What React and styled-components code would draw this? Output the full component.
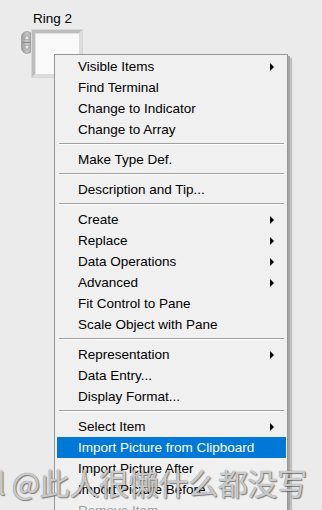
import React from 'react';
import styled, { createGlobalStyle } from 'styled-components';

const GlobalStyle = createGlobalStyle`
  html, body {
    margin: 0;
    padding: 0;
    background: #ebebeb;
  }
  body {
    font-family: 'Liberation Sans', Arial, sans-serif;
  }
`;

const Page = styled.div`
  position: relative;
  width: 322px;
  height: 510px;
  overflow: hidden;
  background: #ebebeb;
`;

// Ring control
const Ring = styled.div`
  display: flex;
  flex-direction: column;
  padding: 10px 0 0 21px;
`;

const RingLabel = styled.div`
  margin-left: 12px;
  font-size: 13.5px;
  line-height: 17px;
  color: #000;
`;

const RingBody = styled.div`
  display: flex;
  align-items: flex-start;
  margin-top: 3px;
`;

const Spinner = styled.svg`
  display: block;
  width: 12px;
  height: 23px;
  margin-top: 1px;
  margin-right: -1px;
`;

const RingBox = styled.div`
  width: 44px;
  height: 41px;
  background: #f9f9f9;
  border: 3px solid;
  border-color: #bcbcbc #dcdcdc #dcdcdc #bcbcbc;
  box-shadow: inset 1px 1px 0 #e2e2e2;
  outline: 1px solid #d8d8d8;
`;

// Menu
const Menu = styled.div`
  position: absolute;
  left: 54px;
  top: 54px;
  width: 232px;
  padding: 1px 0 0;
  background: #f0f0f0;
  border: 1px solid #979797;
  box-shadow: 2px 2px 0 #a6a6a6, 4px 4px 1px rgba(0, 0, 0, 0.18);
  font-size: 13.5px;
  color: #000;
`;

const Item = styled.div`
  position: relative;
  display: flex;
  align-items: center;
  height: 21px;
  margin: 0 1px 0 2px;
  padding-left: 21px;
  white-space: nowrap;
  background: ${p => (p.$active ? '#0078d7' : 'transparent')};
  color: ${p => (p.$active ? '#fff' : p.$disabled ? '#a0a0a0' : '#000')};
`;

const Arrow = styled.span`
  position: absolute;
  right: 12px;
  top: 7px;
  width: 0;
  height: 0;
  border-top: 4px solid transparent;
  border-bottom: 4px solid transparent;
  border-left: 4px solid #000;
`;

const Separator = styled.div`
  height: 9px;
  display: flex;
  flex-direction: column;
  padding: 3px 3px 0 4px;
  box-sizing: border-box;
  &::before {
    content: '';
    height: 1px;
    background: #a0a0a0;
  }
  &::after {
    content: '';
    height: 1px;
    background: #ffffff;
  }
`;

const Watermark = styled.div`
  position: absolute;
  left: -3px;
  top: 462px;
  font-family: 'Noto Sans CJK SC', sans-serif;
  font-size: 30px;
  line-height: 40px;
  white-space: nowrap;
  color: rgba(246, 246, 246, 0.72);
  text-shadow: 0 0 1px #555, 1px 1px 1px rgba(60, 60, 60, 0.6);
  letter-spacing: -0.3px;
  pointer-events: none;
`;

const groups = [
  [{ label: 'Visible Items', sub: true }, { label: 'Find Terminal' }, { label: 'Change to Indicator' }, { label: 'Change to Array' }],
  [{ label: 'Make Type Def.' }],
  [{ label: 'Description and Tip...' }],
  [
    { label: 'Create', sub: true },
    { label: 'Replace', sub: true },
    { label: 'Data Operations', sub: true },
    { label: 'Advanced', sub: true },
    { label: 'Fit Control to Pane' },
    { label: 'Scale Object with Pane' }
  ],
  [{ label: 'Representation', sub: true }, { label: 'Data Entry...' }, { label: 'Display Format...' }],
  [
    { label: 'Select Item', sub: true },
    { label: 'Import Picture from Clipboard', active: true },
    { label: 'Import Picture After' },
    { label: 'Import Picture Before' },
    { label: 'Remove Item', disabled: true }
  ]
];

const App = () => (
  <Page>
    <GlobalStyle />
    <Ring>
      <RingLabel>Ring 2</RingLabel>
      <RingBody>
        <Spinner viewBox="0 0 12 23">
          <defs>
            <linearGradient id="spin" x1="0" y1="0" x2="1" y2="0">
              <stop offset="0" stopColor="#9a9a9a" />
              <stop offset="0.5" stopColor="#c8c8c8" />
              <stop offset="1" stopColor="#9a9a9a" />
            </linearGradient>
          </defs>
          <rect x="0.5" y="0.5" width="11" height="22" rx="5.5" fill="url(#spin)" stroke="#8a8a8a" strokeWidth="0.6" />
          <line x1="2" y1="11.5" x2="10" y2="11.5" stroke="#7c7c7c" strokeWidth="0.8" />
          <path d="M6 4 L8.5 8.5 L3.5 8.5 Z" fill="#eeeeee" stroke="#777" strokeWidth="0.4" />
          <path d="M6 19 L8.5 14.5 L3.5 14.5 Z" fill="#eeeeee" stroke="#777" strokeWidth="0.4" />
        </Spinner>
        <RingBox />
      </RingBody>
    </Ring>
    <Menu>
      {groups.map((group, gi) => (
        <React.Fragment key={gi}>
          {gi > 0 && <Separator />}
          {group.map(item => (
            <Item key={item.label} $active={item.active} $disabled={item.disabled}>
              {item.label}
              {item.sub && <Arrow />}
            </Item>
          ))}
        </React.Fragment>
      ))}
    </Menu>
    <Watermark>l @此人很懒什么都没写</Watermark>
  </Page>
);

export default App;
